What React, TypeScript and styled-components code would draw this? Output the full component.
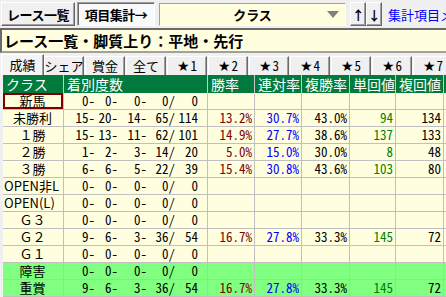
import React from 'react';
import styled, { createGlobalStyle } from 'styled-components';

const GlobalStyle = createGlobalStyle`
  html, body { margin: 0; padding: 0; }
  body {
    width: 446px;
    height: 297px;
    overflow: hidden;
    background: #f0f0f0;
    font-family: "Noto Sans CJK JP", "DejaVu Sans", sans-serif;
    font-size: 13px;
  }
`;

const FONT = `"Noto Sans CJK JP", "DejaVu Sans", sans-serif`;

const Window = styled.div`
  display: flex;
  flex-direction: column;
  width: 446px;
  height: 297px;
  overflow: hidden;
`;

const TopBar = styled.div`
  display: flex;
  align-items: center;
  height: 28px;
  padding: 0 0 0 1px;
  gap: 2px;
  white-space: nowrap;
  overflow: hidden;
`;

const ToolButton = styled.button<{ $w: number; $pressed?: boolean }>`
  flex: 0 0 auto;
  width: ${(p) => p.$w}px;
  height: 24px;
  margin: 0;
  padding: 0;
  font: bold 13px ${FONT};
  letter-spacing: -0.5px;
  color: #000;
  background: ${(p) => (p.$pressed ? '#fafafa' : '#f0f0f0')};
  border: 1px solid;
  border-color: ${(p) => (p.$pressed ? '#a0a0a0 #ffffff #ffffff #a0a0a0' : '#ffffff #696969 #696969 #ffffff')};
  box-shadow: ${(p) => (p.$pressed ? 'inset 1px 1px #696969' : 'inset -1px -1px #a0a0a0')};
  display: flex;
  align-items: center;
  justify-content: center;
`;

const Combo = styled.div`
  position: relative;
  flex: 0 0 auto;
  box-sizing: border-box;
  width: 187px;
  height: 23px;
  margin-left: 2px;
  background: #ffffe0;
  border: 1px solid;
  border-color: #a0a0a0 #ffffff #ffffff #a0a0a0;
  display: flex;
  align-items: center;
  justify-content: center;
  font: bold 13px ${FONT};
`;

const ComboArrow = styled.svg`
  position: absolute;
  right: 6px;
  top: 7px;
`;

const ArrowGroup = styled.div`
  flex: 0 0 auto;
  display: flex;
  margin-left: 2px;
`;

const LinkText = styled.span`
  flex: 0 0 auto;
  margin-left: 4px;
  color: #0000ff;
  font-size: 13px;
`;

const TitleBar = styled.div`
  height: 21px;
  background: #ffffe0;
  border-top: 2px solid #6a6a6a;
  border-left: 2px solid #6a6a6a;
  border-bottom: 2px solid #a0a0a0;
  display: flex;
  align-items: center;
  padding-left: 2px;
  font: bold 15px ${FONT};
  white-space: nowrap;
  overflow: hidden;
`;

const TabStrip = styled.div`
  display: flex;
  align-items: flex-end;
  height: 22px;
  padding-left: 1px;
  white-space: nowrap;
`;

const Tab = styled.div<{ $active?: boolean }>`
  flex: 0 0 auto;
  width: ${(p) => (p.$active ? 43 : 40)}px;
  height: ${(p) => (p.$active ? 21 : 19)}px;
  margin-right: ${(p) => (p.$active ? 0 : 1)}px;
  box-sizing: border-box;
  background: ${(p) => (p.$active ? '#f4f4f4' : '#f0f0f0')};
  border-top: 1px solid #ffffff;
  border-left: 1px solid #ffffff;
  border-right: 1px solid #696969;
  box-shadow: inset -1px 0 #a0a0a0;
  display: flex;
  align-items: center;
  justify-content: center;
  font-size: 13px;
  line-height: 16px;
`;

const TabNum = styled.span`
  font-feature-settings: "hwid" 1;
`;

const Star = styled.span`
  font-family: "DejaVu Sans", sans-serif;
  font-size: 14px;
  margin-right: 1px;
`;

const Table = styled.div`
  margin-left: 3px;
  display: flex;
  flex-direction: column;
`;

const COLS = '61px 144px 47px 47px 48px 46px 48px 60px';

const HeaderRow = styled.div`
  display: grid;
  grid-template-columns: ${COLS};
  height: 18px;
  background: #007a3d;
  color: #ffffff;
`;

const HeadCell = styled.div`
  border-right: 1px solid #c8c8c8;
  padding-left: 3px;
  font-size: 14px;
  line-height: 18px;
  white-space: nowrap;
  overflow: hidden;
`;

const Row = styled.div<{ $green?: boolean }>`
  display: grid;
  grid-template-columns: ${COLS};
  height: 17px;
  background: ${(p) => (p.$green ? '#80ff80' : '#ffffe0')};
`;

const Cell = styled.div<{ $color?: string; $align?: string; $selected?: boolean; $num?: boolean }>`
  box-sizing: border-box;
  height: 17px;
  border-right: 1px solid #c0c0c0;
  border-bottom: 1px solid #c0c0c0;
  color: ${(p) => p.$color || '#000'};
  text-align: ${(p) => p.$align || 'right'};
  padding: 0 2px 0 1px;
  font-size: 13px;
  line-height: 16px;
  white-space: nowrap;
  overflow: hidden;
  font-feature-settings: ${(p) => (p.$num ? '"hwid" 1' : 'normal')};
  ${(p) => (p.$selected ? 'box-shadow: inset 0 0 0 2px #800000;' : '')}
`;

const DegreeCell = styled.div`
  box-sizing: border-box;
  height: 17px;
  border-right: 1px solid #c0c0c0;
  border-bottom: 1px solid #c0c0c0;
  display: flex;
  font-size: 13px;
  line-height: 16px;
  white-space: pre;
  font-feature-settings: "hwid" 1;
`;

const Part = styled.span<{ $w: number }>`
  width: ${(p) => p.$w}px;
  text-align: right;
`;

type RowData = {
  name: string;
  align?: string;
  deg: [number, number, number, number, number];
  stats?: [string, string, string, string, string];
  green?: boolean;
};

const rows: RowData[] = [
  { name: '新馬', deg: [0, 0, 0, 0, 0] },
  { name: '未勝利', deg: [15, 20, 14, 65, 114], stats: ['13.2%', '30.7%', '43.0%', '94', '134'] },
  { name: '１勝', deg: [15, 13, 11, 62, 101], stats: ['14.9%', '27.7%', '38.6%', '137', '133'] },
  { name: '２勝', deg: [1, 2, 3, 14, 20], stats: ['5.0%', '15.0%', '30.0%', '8', '48'] },
  { name: '３勝', deg: [6, 6, 5, 22, 39], stats: ['15.4%', '30.8%', '43.6%', '103', '80'] },
  { name: 'OPEN非L', align: 'left', deg: [0, 0, 0, 0, 0] },
  { name: 'OPEN(L)', align: 'left', deg: [0, 0, 0, 0, 0] },
  { name: 'Ｇ３', deg: [0, 0, 0, 0, 0] },
  { name: 'Ｇ２', deg: [9, 6, 3, 36, 54], stats: ['16.7%', '27.8%', '33.3%', '145', '72'] },
  { name: 'Ｇ１', deg: [0, 0, 0, 0, 0] },
  { name: '障害', deg: [0, 0, 0, 0, 0], green: true },
  { name: '重賞', deg: [9, 6, 3, 36, 54], stats: ['16.7%', '27.8%', '33.3%', '145', '72'], green: true },
];

const statColors = ['#800000', '#0000ff', '#000000', '#008000', '#000000'];
const plainTabs = ['シェア', '賞金', '全て'];
const starTabs = ['1', '2', '3', '4', '5', '6', '7', '8'];
const headers = ['クラス', '着別度数', '勝率', '連対率', '複勝率', '単回値', '複回値', '単'];

const App: React.FC = () => {
  return (
    <Window>
      <GlobalStyle />
      <TopBar>
        <ToolButton $w={74}>レース一覧</ToolButton>
        <ToolButton $w={78} $pressed>
          項目集計→
        </ToolButton>
        <Combo>
          クラス
          <ComboArrow width="12" height="8" viewBox="0 0 12 8">
            <path d="M0 0 H12 L6 7 Z" fill="#808080" />
          </ComboArrow>
        </Combo>
        <ArrowGroup>
          <ToolButton $w={16}>↑</ToolButton>
          <ToolButton $w={16}>↓</ToolButton>
        </ArrowGroup>
        <LinkText>集計項目メニュー</LinkText>
      </TopBar>
      <TitleBar>レース一覧・脚質上り：平地・先行</TitleBar>
      <TabStrip>
        <Tab $active>成績</Tab>
        {plainTabs.map((t) => (
          <Tab key={t}>{t}</Tab>
        ))}
        {starTabs.map((t) => (
          <Tab key={t}>
            <Star>★</Star>
            <TabNum>{t}</TabNum>
          </Tab>
        ))}
      </TabStrip>
      <Table>
        <HeaderRow>
          {headers.map((h) => (
            <HeadCell key={h}>{h}</HeadCell>
          ))}
        </HeaderRow>
        {rows.map((r, i) => (
          <Row key={r.name} $green={r.green}>
            <Cell $align={r.align || 'center'} $selected={i === 0}>
              {r.name}
            </Cell>
            <DegreeCell>
              <Part $w={31}>{r.deg[0]}-</Part>
              <Part $w={23}>{r.deg[1]}-</Part>
              <Part $w={29}>{r.deg[2]}-</Part>
              <Part $w={28}>{r.deg[3]}/</Part>
              <Part $w={23}>{r.deg[4]}</Part>
            </DegreeCell>
            {statColors.map((c, j) => (
              <Cell key={j} $color={c} $num>
                {r.stats ? r.stats[j] : ''}
              </Cell>
            ))}
            <Cell />
          </Row>
        ))}
      </Table>
    </Window>
  );
};

export default App;
